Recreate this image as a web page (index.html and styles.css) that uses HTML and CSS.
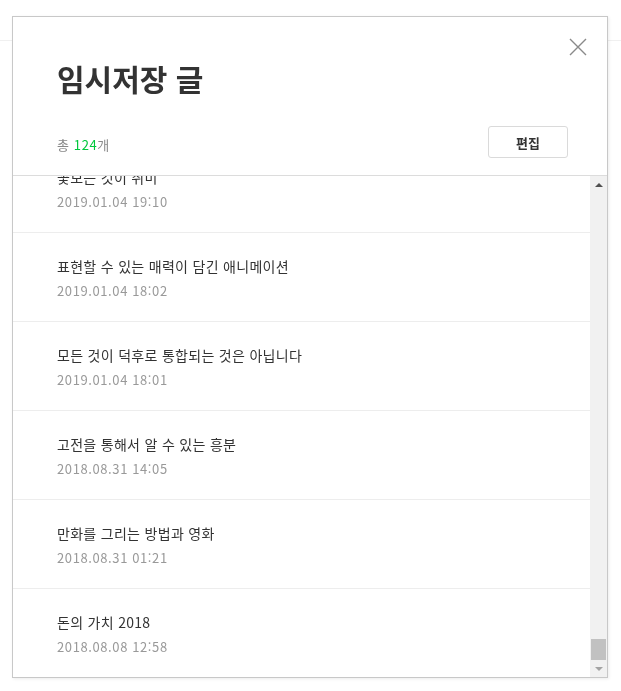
FILE: index.html
```html
<!DOCTYPE html>
<html lang="ko">
<head>
  <meta charset="UTF-8">
  <title>임시저장 글</title>
  <link rel="stylesheet" href="styles.css">
</head>
<body>
  <div class="top-bar"></div>

  <div class="draft-modal">
    <div class="modal-header">
      <h2>임시저장 글</h2>
      <div class="header-row">
        <span class="count">총 <em>124</em>개</span>
        <button class="edit-button">편집</button>
      </div>
      <button class="close-button" aria-label="닫기">
        <svg width="18" height="18" viewBox="0 0 18 18">
          <path d="M1 1 L17 17 M17 1 L1 17" stroke="#8a8a8a" stroke-width="1.4" fill="none"/>
        </svg>
      </button>
    </div>

    <div class="modal-body">
      <ul class="draft-list">
        <li>
          <p class="draft-title">꽃보는 것이 취미</p>
          <p class="draft-date">2019.01.04 19:10</p>
        </li>
        <li>
          <p class="draft-title">표현할 수 있는 매력이 담긴 애니메이션</p>
          <p class="draft-date">2019.01.04 18:02</p>
        </li>
        <li>
          <p class="draft-title">모든 것이 덕후로 통합되는 것은 아닙니다</p>
          <p class="draft-date">2019.01.04 18:01</p>
        </li>
        <li>
          <p class="draft-title">고전을 통해서 알 수 있는 흥분</p>
          <p class="draft-date">2018.08.31 14:05</p>
        </li>
        <li>
          <p class="draft-title">만화를 그리는 방법과 영화</p>
          <p class="draft-date">2018.08.31 01:21</p>
        </li>
        <li>
          <p class="draft-title">돈의 가치 2018</p>
          <p class="draft-date">2018.08.08 12:58</p>
        </li>
      </ul>

      <div class="scrollbar">
        <div class="scroll-btn"><span class="arrow-up"></span></div>
        <div class="scroll-track"><div class="scroll-thumb"></div></div>
        <div class="scroll-btn"><span class="arrow-down"></span></div>
      </div>
    </div>
  </div>
</body>
</html>
```

FILE: styles.css
```css
body {
  margin: 0;
  background: #fff;
  font-family: "Noto Sans CJK KR", "Noto Sans", sans-serif;
  color: #333;
}

.top-bar {
  height: 40px;
  border-bottom: 1px solid #f0f0f0;
}

.draft-modal {
  position: fixed;
  left: 12px;
  top: 16px;
  width: 596px;
  height: 662px;
  box-sizing: border-box;
  border: 1px solid #c8c8c8;
  background: #fff;
  box-shadow: 1px 1px 3px rgba(0,0,0,0.08);
  display: flex;
  flex-direction: column;
}

.modal-header {
  position: relative;
  padding: 44px 39px 17px 44px;
  border-bottom: 1px solid #dcdcdc;
}

h2 {
  margin: 0;
  font-size: 30px;
  line-height: 34px;
  font-weight: bold;
  color: #333;
}

.header-row {
  display: flex;
  justify-content: space-between;
  margin-top: 31px;
}

.count {
  font-size: 13px;
  line-height: 20px;
  letter-spacing: 0.6px;
  color: #888;
  margin-top: 9px;
}

.count em {
  font-style: normal;
  color: #00c73c;
}

.edit-button {
  width: 80px;
  height: 32px;
  border: 1px solid #dadada;
  border-radius: 3px;
  background: #fff;
  font-family: inherit;
  font-size: 13px;
  font-weight: bold;
  color: #333;
  padding: 0;
}

.close-button {
  position: absolute;
  top: 21px;
  right: 20px;
  width: 18px;
  height: 18px;
  padding: 0;
  border: none;
  background: none;
}

.close-button svg {
  display: block;
}

.modal-body {
  flex: 1;
  display: flex;
  min-height: 0;
}

.draft-list {
  flex: 1;
  margin: 0;
  padding: 0;
  list-style: none;
  overflow: hidden;
  display: flex;
  flex-direction: column;
  justify-content: flex-end;
}

.draft-list li {
  flex-shrink: 0;
  border-top: 1px solid #ededed;
  padding: 23px 44px 20px;
}

.draft-title {
  margin: 0;
  font-size: 14px;
  line-height: 20px;
  letter-spacing: 0.3px;
  color: #333;
}

.draft-date {
  margin: 5px 0 0;
  font-size: 13px;
  line-height: 20px;
  letter-spacing: 0.6px;
  color: #999;
}

.scrollbar {
  width: 17px;
  background: #f1f1f1;
  display: flex;
  flex-direction: column;
}

.scroll-btn {
  height: 17px;
  display: flex;
  align-items: center;
  justify-content: center;
}

.arrow-up {
  border-left: 4px solid transparent;
  border-right: 4px solid transparent;
  border-bottom: 4px solid #505050;
}

.arrow-down {
  border-left: 4px solid transparent;
  border-right: 4px solid transparent;
  border-top: 4px solid #a3a3a3;
}

.scroll-track {
  flex: 1;
  display: flex;
  flex-direction: column;
  justify-content: flex-end;
}

.scroll-thumb {
  height: 21px;
  margin: 0 1px;
  background: #c1c1c1;
}
```
